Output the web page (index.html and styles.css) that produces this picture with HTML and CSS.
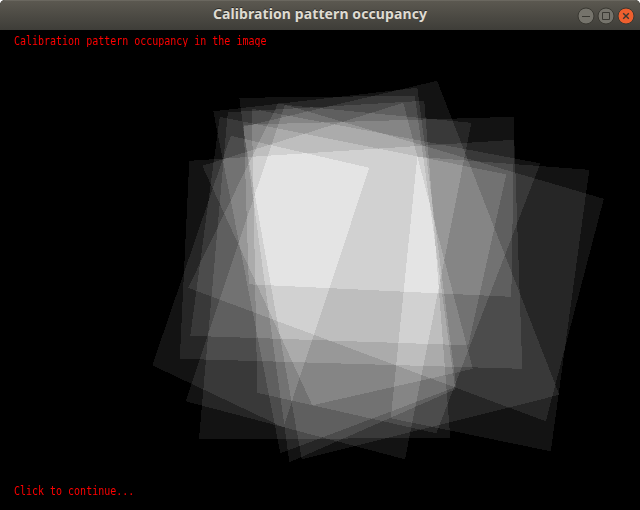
FILE: index.html
```html
<!DOCTYPE html>
<html lang="en">
<head>
<meta charset="utf-8">
<title>Calibration pattern occupancy</title>
<link rel="stylesheet" href="styles.css">
</head>
<body>
<div class="window">
  <header class="titlebar">
    <h1 class="title">Calibration pattern occupancy</h1>
    <div class="controls">
      <svg class="control" viewBox="0 0 18 18"><circle cx="9" cy="9" r="8"/><path d="M5 9.5h8"/></svg>
      <svg class="control" viewBox="0 0 18 18"><circle cx="9" cy="9" r="8"/><path d="M5.5 5.5h7v7h-7z"/></svg>
      <svg class="control close" viewBox="0 0 18 18"><circle cx="9" cy="9" r="8"/><path d="M6.2 6.2l5.6 5.6M11.8 6.2l-5.6 5.6"/></svg>
    </div>
  </header>
  <main class="view">
    <svg class="occupancy" viewBox="0.2 30.2 640 480" shape-rendering="crispEdges">
      <polygon points="231,136 369.5,168 283.5,427.5 152.5,365.5"/>
      <polygon points="417.5,157 589.5,170 551,451.5 391,418.5"/>
      <polygon points="244,125 514.5,117 511.5,297 249,284.5"/>
      <polygon points="189.5,161 514.5,140 522.5,369 180,359"/>
      <polygon points="220,117 506.5,174.5 468.5,345.5 190.5,336"/>
      <polygon points="202.5,166 403.5,103 473,369 312.5,405.5"/>
      <polygon points="239.5,98 415,96 455.5,389.5 289.6,462.5"/>
      <polygon points="228,112.5 424.5,101 450.5,438.5 199.2,439"/>
      <polygon points="213.5,111.5 417.5,88 456.5,387 280.6,453.5"/>
      <polygon points="243,127 437.3,81 559.5,395 302,459.5"/>
      <polygon points="252,109 540.5,163.5 436.5,433.5 257.5,393"/>
      <polygon points="285,105 471.5,123 405.2,459.5 186,401.5"/>
      <polygon points="278.5,103 604,199 546,421.5 188.3,288"/>
    </svg>
    <p class="message">Calibration pattern occupancy in the image</p>
    <p class="message">Click to continue...</p>
  </main>
</div>
</body>
</html>
```
FILE: styles.css
```css
* { box-sizing: border-box; }
body { margin: 0; background: #fff; overflow: hidden; }
h1, p { margin: 0; }
.window { width: 640px; height: 510px; display: flex; flex-direction: column; border-radius: 5px 5px 0 0; overflow: hidden; background: #000; }
.titlebar {
  height: 30px; flex: none; display: grid; grid-template-columns: 1fr auto 1fr; align-items: center;
  background: linear-gradient(#5b5850, #3e3d38);
  border-top: 1px solid #6a675f;
}
.title {
  grid-column: 2; font: bold 14px/25px "Noto Sans", "Open Sans", sans-serif; letter-spacing: 0.1px;
  padding-bottom: 4px;
  color: #dfdbd2; text-shadow: 0 -1px 0 #2c2b28; white-space: nowrap;
}
.controls { display: flex; gap: 2px; justify-content: flex-end; padding-right: 5px; }
.control { width: 18px; height: 18px; fill: #75736b; stroke: #393832; stroke-width: 1; }
.control path { fill: none; }
.close { fill: #ee5f2e; }
.close path { stroke-width: 1.4; }
.view { position: relative; flex: 1; display: flex; flex-direction: column; justify-content: space-between; padding: 4px 14px 13px; isolation: isolate; }
.occupancy { position: absolute; inset: 0; width: 640px; height: 480px; background: #000; isolation: isolate; }
.occupancy polygon { fill: #131313; mix-blend-mode: plus-lighter; }
.message {
  position: relative; font: 10px/13px "DejaVu Sans Mono", monospace; letter-spacing: -0.01px;
  color: #f00; transform: scaleY(1.15); white-space: pre;
}
```
